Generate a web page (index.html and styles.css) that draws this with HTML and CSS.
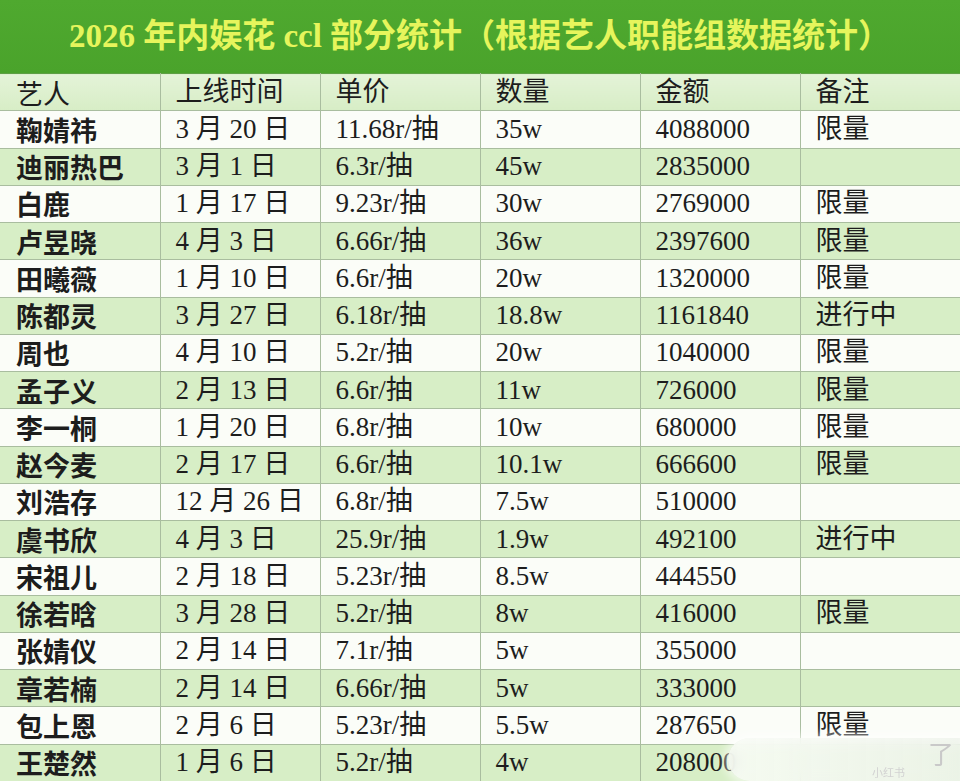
FILE: index.html
```html
<!DOCTYPE html>
<html lang="zh">
<head>
<meta charset="utf-8">
<link rel="stylesheet" href="styles.css">
</head>
<body>
<div class="sheet">
  <div class="title">2026 年内娱花 ccl 部分统计（根据艺人职能组数据统计）</div>
  <table class="grid">
    <colgroup><col><col><col><col><col><col></colgroup>
    <thead>
      <tr><th class="name">艺人</th><th>上线时间</th><th>单价</th><th>数量</th><th>金额</th><th>备注</th></tr>
    </thead>
    <tbody>
      <tr><td class="name">鞠婧祎</td><td>3 月 20 日</td><td>11.68r/抽</td><td>35w</td><td>4088000</td><td>限量</td></tr>
      <tr><td class="name">迪丽热巴</td><td>3 月 1 日</td><td>6.3r/抽</td><td>45w</td><td>2835000</td><td></td></tr>
      <tr><td class="name">白鹿</td><td>1 月 17 日</td><td>9.23r/抽</td><td>30w</td><td>2769000</td><td>限量</td></tr>
      <tr><td class="name">卢昱晓</td><td>4 月 3 日</td><td>6.66r/抽</td><td>36w</td><td>2397600</td><td>限量</td></tr>
      <tr><td class="name">田曦薇</td><td>1 月 10 日</td><td>6.6r/抽</td><td>20w</td><td>1320000</td><td>限量</td></tr>
      <tr><td class="name">陈都灵</td><td>3 月 27 日</td><td>6.18r/抽</td><td>18.8w</td><td>1161840</td><td>进行中</td></tr>
      <tr><td class="name">周也</td><td>4 月 10 日</td><td>5.2r/抽</td><td>20w</td><td>1040000</td><td>限量</td></tr>
      <tr><td class="name">孟子义</td><td>2 月 13 日</td><td>6.6r/抽</td><td>11w</td><td>726000</td><td>限量</td></tr>
      <tr><td class="name">李一桐</td><td>1 月 20 日</td><td>6.8r/抽</td><td>10w</td><td>680000</td><td>限量</td></tr>
      <tr><td class="name">赵今麦</td><td>2 月 17 日</td><td>6.6r/抽</td><td>10.1w</td><td>666600</td><td>限量</td></tr>
      <tr><td class="name">刘浩存</td><td>12 月 26 日</td><td>6.8r/抽</td><td>7.5w</td><td>510000</td><td></td></tr>
      <tr><td class="name">虞书欣</td><td>4 月 3 日</td><td>25.9r/抽</td><td>1.9w</td><td>492100</td><td>进行中</td></tr>
      <tr><td class="name">宋祖儿</td><td>2 月 18 日</td><td>5.23r/抽</td><td>8.5w</td><td>444550</td><td></td></tr>
      <tr><td class="name">徐若晗</td><td>3 月 28 日</td><td>5.2r/抽</td><td>8w</td><td>416000</td><td>限量</td></tr>
      <tr><td class="name">张婧仪</td><td>2 月 14 日</td><td>7.1r/抽</td><td>5w</td><td>355000</td><td></td></tr>
      <tr><td class="name">章若楠</td><td>2 月 14 日</td><td>6.66r/抽</td><td>5w</td><td>333000</td><td></td></tr>
      <tr><td class="name">包上恩</td><td>2 月 6 日</td><td>5.23r/抽</td><td>5.5w</td><td>287650</td><td>限量</td></tr>
      <tr><td class="name">王楚然</td><td>1 月 6 日</td><td>5.2r/抽</td><td>4w</td><td>208000</td><td></td></tr>
    </tbody>
  </table>
  <div class="watermark"><span class="wm-mark">了</span><span class="wm-brand">小红书</span></div>
</div>
</body>
</html>
```

FILE: styles.css
```css
html, body {
  margin: 0;
  padding: 0;
  background: #ffffff;
  overflow: hidden;
}

.sheet {
  position: relative;
  width: 960px;
  height: 781px;
  overflow: hidden;
}

.title {
  height: 73px;
  background: linear-gradient(#4fa92f, #4aa32b);
  color: #e6f55c;
  font-family: "Liberation Serif", "Noto Sans CJK SC", serif;
  font-weight: 700;
  font-size: 33px;
  line-height: 73px;
  text-align: center;
  white-space: nowrap;
}

.grid {
  width: 960px;
  border-collapse: collapse;
  table-layout: fixed;
  font-family: "Liberation Serif", "Noto Sans CJK SC", serif;
  font-size: 27px;
  color: #1d1d1d;
}

.grid col { width: 160px; }

.grid tr { height: 37.26px; }

.grid th,
.grid td {
  height: 37.26px;
  padding: 0 0 0 15px;
  border: 1px solid #a9bd9f;
  text-align: left;
  font-weight: 400;
  white-space: nowrap;
  line-height: 1;
  box-sizing: border-box;
}

.grid thead th {
  background: linear-gradient(#e4f3d8, #d7edc6);
  border-top: 1px solid #5d9f44;
}

.grid tbody tr:nth-child(odd) td { background: #fbfdf8; }
.grid tbody tr:nth-child(even) td { background: #d7eec6; }

.grid .name {
  font-family: "Noto Sans CJK SC", sans-serif;
  font-weight: 700;
  padding-left: 16px;
}

.grid thead th.name { font-weight: 400; }

.grid th:first-child,
.grid td:first-child { border-left: none; }
.grid th:last-child,
.grid td:last-child { border-right: none; }

.watermark {
  position: absolute;
  left: 728px;
  top: 738px;
  width: 240px;
  height: 43px;
  border-radius: 22px 0 0 22px;
  background: linear-gradient(90deg, rgba(250, 252, 248, 0.85), rgba(240, 244, 238, 0.8));
  backdrop-filter: blur(6px);
  box-shadow: 0 0 10px 4px rgba(255, 255, 255, 0.6);
}

.wm-mark {
  position: absolute;
  left: 200px;
  top: 0;
  font-family: "Noto Sans CJK SC", sans-serif;
  font-size: 26px;
  line-height: 30px;
  color: #c9c9c9;
}

.wm-brand {
  position: absolute;
  left: 144px;
  top: 28px;
  font-family: "Noto Sans CJK SC", sans-serif;
  font-size: 11px;
  line-height: 13px;
  color: #d2d2d2;
}
```
